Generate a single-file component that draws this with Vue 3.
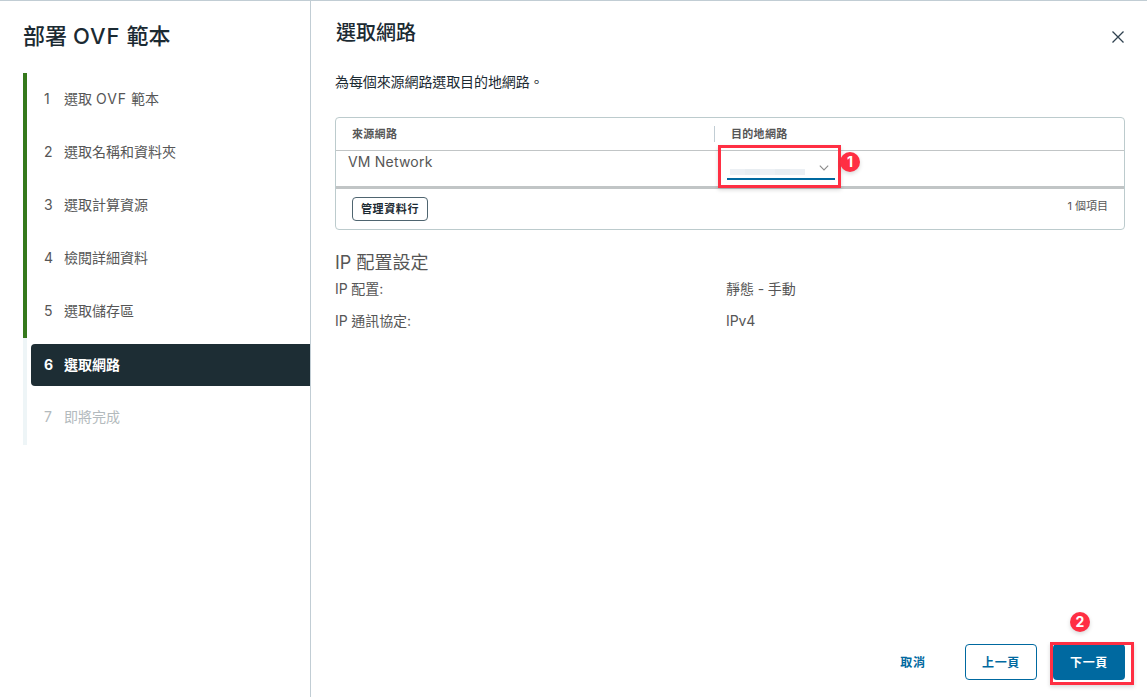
<script setup>
import {ref} from 'vue'

const steps = [
    {id: 1, name: "選取 OVF 範本"},
    {id: 2, name: "選取名稱和資料夾"},
    {id: 3, name: "選取計算資源"},
    {id: 4, name: "檢閱詳細資料"},
    {id: 5, name: "選取儲存區"},
    {id: 6, name: "選取網路"},
    {id: 7, name: "即將完成"}
]

const current = ref(6)

const networks = [
    {source: "VM Network"}
]

const settings = [
    {label: "IP 配置:", value: "靜態 - 手動"},
    {label: "IP 通訊協定:", value: "IPv4"}
]

const stepClass = step => ({
    done: step.id < current.value,
    active: step.id === current.value,
    pending: step.id > current.value
})

// latin words get their own tracking next to the CJK text
const parts = name => name.split(/([A-Z]+)/).filter(Boolean)
const isLatin = part => /^[A-Z]+$/.test(part)

const next = () => {
    current.value = Math.min(current.value + 1, steps.length)
}

const back = () => {
    current.value = Math.max(current.value - 1, 1)
}
</script>

<template>
    <div class="wizard">
        <aside>
            <h1>部署 <span class="wide">OVF</span> 範本</h1>
            <ol>
                <li v-for="step in steps" :key="step.id" :class="stepClass(step)">
                    <div class="step">
                        <span class="num">{{ step.id }}</span>
                        <span class="name"><span v-for="p in parts(step.name)" :class="{wide: isLatin(p)}">{{ p }}</span></span>
                    </div>
                </li>
            </ol>
        </aside>

        <main>
            <header>
                <h2>選取網路</h2>
                <button class="close" aria-label="關閉">
                    <svg viewBox="0 0 12 12" width="12" height="12">
                        <path d="M0.5 0.5 L11.5 11.5 M11.5 0.5 L0.5 11.5" />
                    </svg>
                </button>
            </header>

            <p class="intro">為每個來源網路選取目的地網路。</p>

            <section class="grid">
                <div class="row head">
                    <div class="col">來源網路</div>
                    <div class="col">目的地網路</div>
                </div>
                <div class="row body" v-for="n in networks" :key="n.source">
                    <div class="source">{{ n.source }}</div>
                    <div class="target">
                        <div class="select">
                            <span class="masked"><i></i><i></i><i></i><i></i><i></i></span>
                            <svg viewBox="0 0 10 6" width="10" height="6">
                                <path d="M0.8 0.6 L5 4.9 L9.2 0.6" />
                            </svg>
                        </div>
                        <div class="mark mark-select"></div>
                        <span class="badge badge-select">1</span>
                    </div>
                </div>
                <div class="foot">
                    <button class="columns">管理資料行</button>
                    <span class="count">1 個項目</span>
                </div>
            </section>

            <h3>IP 配置設定</h3>
            <dl>
                <template v-for="s in settings" :key="s.label">
                    <dt>{{ s.label }}</dt>
                    <dd>{{ s.value }}</dd>
                </template>
            </dl>

            <footer>
                <button class="btn link">取消</button>
                <button class="btn outline" @click="back">上一頁</button>
                <div class="next">
                    <button class="btn primary" @click="next">下一頁</button>
                    <div class="mark mark-next"></div>
                    <span class="badge badge-next">2</span>
                </div>
            </footer>
        </main>
    </div>
</template>

<style>
    body {
        margin: 0;
        background: #fff;
    }
</style>

<style scoped>
    * {
        box-sizing: border-box;
    }

    .wizard {
        display: flex;
        height: 100vh;
        border-top: 1px solid #c1cdd4;
        font-family: Inter, "Noto Sans CJK TC", sans-serif;
        font-size: 14px;
        line-height: 20px;
        color: #565656;
        overflow: hidden;
    }

    button {
        font-family: inherit;
        cursor: pointer;
    }

    h1, h2, h3, p, ol, dl, dd {
        margin: 0;
        padding: 0;
        font-weight: 400;
    }

    aside {
        flex: 0 0 311px;
        border-right: 1px solid #c1cdd4;
        padding: 20px 0 0 23px;
    }

    h1 {
        font-size: 22px;
        font-weight: 500;
        line-height: 30px;
        color: #1b2a32;
        margin-bottom: 22px;
        white-space: nowrap;
    }

    .wide {
        letter-spacing: 1px;
    }

    ol {
        list-style: none;
    }

    li {
        height: 53px;
        border-left: 4px solid #eef5f7;
        padding: 6px 0 5px 4px;
    }
    li.done {
        border-color: #35791c;
    }
    li.active {
        height: 54px;
    }
    li.pending {
        padding-top: 5px;
        color: #b3babd;
    }

    .step {
        display: flex;
        align-items: center;
        height: 40px;
        padding-left: 13px;
        border-radius: 4px 0 0 4px;
    }
    .active .step {
        height: 42px;
        background: #1d2d34;
        color: #fff;
        font-weight: 700;
    }

    .num {
        width: 20px;
    }

    .name {
        white-space: pre;
    }

    main {
        flex: 1;
        display: flex;
        flex-direction: column;
        padding: 16px 22px 17px 24px;
    }

    header {
        display: flex;
        justify-content: space-between;
        height: 55px;
    }

    h2 {
        font-size: 20px;
        font-weight: 500;
        line-height: 32px;
        color: #1b2a32;
        padding-left: 1px;
    }

    .close {
        width: 12px;
        height: 12px;
        padding: 0;
        margin: 14px 1px 0 0;
        border: 0;
        background: none;
    }
    .close svg {
        display: block;
    }
    .close path {
        stroke: #304250;
        stroke-width: 1.3;
        fill: none;
    }

    .intro {
        color: #1b2a32;
        letter-spacing: -.1px;
        margin-bottom: 25px;
    }

    .grid {
        height: 113px;
        border: 1px solid #bccbcd;
        border-radius: 4px;
        width: 790px;
    }

    .row {
        display: grid;
        grid-template-columns: 379px 1fr;
    }

    .head {
        height: 33px;
        align-items: center;
        border-bottom: 1px solid #c1c5c6;
        font-size: 11px;
        font-weight: 700;
        line-height: 16px;
        letter-spacing: .3px;
    }
    .head .col {
        padding-left: 16px;
    }
    .head .col + .col {
        border-left: 1px solid #c1cdd4;
        margin-left: -1px;
    }

    .body {
        height: 38px;
        border-bottom: 3px solid #c1c5c6;
    }

    .source {
        padding: 1px 0 0 12px;
        letter-spacing: .2px;
    }

    .target {
        position: relative;
        padding-left: 12px;
    }

    .select {
        display: flex;
        justify-content: space-between;
        align-items: flex-start;
        width: 108px;
        height: 29px;
        padding: 14px 6px 0 3px;
        border-bottom: 2px solid #0069a0;
    }
    .select path {
        stroke: #8c8c8c;
        stroke-width: 1.1;
        fill: none;
    }

    .masked {
        display: flex;
        margin-top: 4px;
    }
    .masked i {
        width: 15px;
        height: 6px;
        background: #ecf0f4;
    }
    .masked i:nth-child(even) {
        background: #e8edf1;
    }

    .foot {
        display: flex;
        justify-content: space-between;
        padding: 8px 16px 0;
    }

    .columns {
        width: 76px;
        height: 24px;
        padding: 0;
        border: 1px solid #4f6570;
        border-radius: 4px;
        background: #fff;
        color: #1b2a32;
        font-size: 11px;
        font-weight: 700;
        letter-spacing: .6px;
        line-height: 20px;
    }

    .count {
        font-size: 11px;
        line-height: 18px;
    }

    h3 {
        font-size: 18px;
        line-height: 26px;
        margin-top: 20px;
    }

    dl {
        display: grid;
        grid-template-columns: 391px 1fr;
        row-gap: 12px;
        margin-top: 3px;
        letter-spacing: -.1px;
    }

    footer {
        display: flex;
        justify-content: flex-end;
        margin-top: auto;
    }

    .btn {
        height: 36px;
        width: 72px;
        padding: 0 0 1px;
        border: 1px solid transparent;
        border-radius: 4px;
        background: none;
        color: #0069a0;
        font-size: 12px;
        font-weight: 700;
        letter-spacing: .7px;
    }
    .btn.link {
        margin-right: 16px;
    }
    .btn.outline {
        border-color: #0069a0;
        margin-right: 16px;
    }
    .btn.primary {
        background: #0069a0;
        color: #fff;
    }

    .next {
        position: relative;
    }

    /* numbered callouts */
    .mark {
        position: absolute;
        border: 3px solid #ff2f43;
        box-shadow: 0 2px 4px rgba(0, 0, 0, .15);
        pointer-events: none;
    }
    .mark-select {
        left: 3px;
        top: -6px;
        width: 123px;
        height: 43px;
    }
    .mark-next {
        left: -3px;
        top: -2px;
        width: 84px;
        height: 43px;
    }

    .badge {
        position: absolute;
        width: 20px;
        height: 20px;
        border-radius: 50%;
        background: #ff2f43;
        color: #fff;
        font-size: 14px;
        font-weight: 700;
        line-height: 20px;
        text-align: center;
        box-shadow: 0 2px 4px rgba(0, 0, 0, .15);
    }
    .badge-select {
        left: 125px;
        top: 1px;
    }
    .badge-next {
        left: 17px;
        top: -32px;
    }
</style>
